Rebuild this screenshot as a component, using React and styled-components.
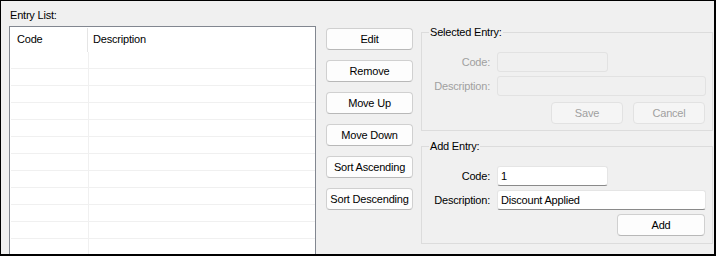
import React from 'react'
import styled, { createGlobalStyle } from 'styled-components'

const GlobalStyle = createGlobalStyle`
  html, body {
    margin: 0;
    padding: 0;
    background: #000;
  }
  body {
    font-family: "Liberation Sans", Arial, sans-serif;
    font-size: 11px;
    letter-spacing: -0.2px;
    color: #000;
  }
  #root {
    padding: 1px 2px 2px 1px;
  }
`

const Window = styled('div')`
  display: flex;
  align-items: flex-start;
  width: 713px;
  height: 253px;
  box-sizing: border-box;
  padding: 8px 1px 0 8px;
  background: #f0f0f0;
  overflow: hidden;
`

const ListColumn = styled('div')`
  display: flex;
  flex-direction: column;
  width: 307px;
  flex-shrink: 0;
`

const Caption = styled('div')`
  line-height: 13px;
  margin-bottom: 4px;
  padding-left: 1px;
`

const ListBox = styled('div')`
  border: 1px solid #828790;
  background: #fff;
  height: 300px;
`

const HeaderRow = styled('div')`
  display: flex;
  height: 25px;
  padding-top: 1px;
  box-sizing: border-box;
`

const HeaderCell = styled('div')`
  display: flex;
  align-items: center;
  box-sizing: border-box;
  width: ${(props) => props.width ? props.width + 'px' : 'auto'};
  flex: ${(props) => props.width ? 'none' : '1'};
  padding-left: ${(props) => props.indent}px;
  border-right: ${(props) => props.divider ? '1px solid #e5e5e5' : 'none'};
  padding-bottom: 2px;
`

const Rows = styled('div')`
  padding-left: 1px;
`

const Row = styled('div')`
  display: flex;
  height: 17px;
  box-sizing: border-box;
  border-bottom: 1px solid #f0f0f0;
`

const Cell = styled('div')`
  box-sizing: border-box;
  width: ${(props) => props.width ? props.width + 'px' : 'auto'};
  flex: ${(props) => props.width ? 'none' : '1'};
  border-right: ${(props) => props.divider ? '1px solid #f0f0f0' : 'none'};
`

const ButtonColumn = styled('div')`
  display: flex;
  flex-direction: column;
  gap: 10px;
  margin: 19px 0 0 10px;
  flex-shrink: 0;
`

const Button = styled('button')`
  font-family: inherit;
  font-size: 11px;
  letter-spacing: inherit;
  width: ${(props) => props.width || 87}px;
  height: 22px;
  padding: 0;
  box-sizing: border-box;
  border: 1px solid ${(props) => props.disabled ? '#e2e2e2' : '#d0d0d0'};
  border-bottom-color: ${(props) => props.disabled ? '#e2e2e2' : '#b8b8b8'};
  border-radius: 4px;
  background: ${(props) => props.disabled ? '#f5f5f5' : '#fdfdfd'};
  color: ${(props) => props.disabled ? '#a0a0a0' : '#000'};
`

const GroupColumn = styled('div')`
  flex: 1;
  display: flex;
  flex-direction: column;
  gap: 9px;
  margin: 17px 0 0 8px;
`

const Group = styled('fieldset')`
  margin: 0;
  border: 1px solid #dcdcdc;
  padding: 13px 6px ${(props) => props.bottom}px 7px;
  min-width: 0;
`

const Legend = styled('legend')`
  padding: 0 1px;
  line-height: 13px;
`

const Form = styled('div')`
  display: grid;
  grid-template-columns: 61px 1fr;
  column-gap: 7px;
  row-gap: 4px;
  align-items: center;
`

const Label = styled('label')`
  text-align: right;
  color: ${(props) => props.disabled ? '#a0a0a0' : '#000'};
`

const Field = styled('div')`
  width: ${(props) => props.width}px;
  height: 20px;
  box-sizing: border-box;
  padding-left: 3px;
  display: flex;
  align-items: center;
  border: 1px solid ${(props) => props.disabled ? '#e2e2e2' : '#e5e5e5'};
  border-bottom-color: ${(props) => props.disabled ? '#e2e2e2' : '#8a8a8a'};
  border-radius: 3px;
  background: ${(props) => props.disabled ? '#f0f0f0' : '#fff'};
`

const Actions = styled('div')`
  display: flex;
  justify-content: flex-end;
  gap: 10px;
  margin-top: ${(props) => props.top}px;
  padding-right: 1px;
`

const rows = Array.from({ length: 12 })

export default function App() {
  return (
    <>
      <GlobalStyle />
      <Window>
        <ListColumn>
          <Caption>Entry List:</Caption>
          <ListBox>
            <HeaderRow>
              <HeaderCell width={78} indent={7} divider>Code</HeaderCell>
              <HeaderCell indent={5}>Description</HeaderCell>
            </HeaderRow>
            <Rows>
              {rows.map((_, i) => (
                <Row key={i}>
                  <Cell width={78} divider />
                  <Cell />
                </Row>
              ))}
            </Rows>
          </ListBox>
        </ListColumn>

        <ButtonColumn>
          <Button>Edit</Button>
          <Button>Remove</Button>
          <Button>Move Up</Button>
          <Button>Move Down</Button>
          <Button>Sort Ascending</Button>
          <Button>Sort Descending</Button>
        </ButtonColumn>

        <GroupColumn>
          <Group bottom={6}>
            <Legend>Selected Entry:</Legend>
            <Form>
              <Label disabled>Code:</Label>
              <Field width={111} disabled />
              <Label disabled>Description:</Label>
              <Field width={209} disabled />
            </Form>
            <Actions top={6}>
              <Button width={72} disabled>Save</Button>
              <Button width={72} disabled>Cancel</Button>
            </Actions>
          </Group>
          <Group bottom={7}>
            <Legend>Add Entry:</Legend>
            <Form>
              <Label>Code:</Label>
              <Field width={111}>1</Field>
              <Label>Description:</Label>
              <Field width={209}>Discount Applied</Field>
            </Form>
            <Actions top={4}>
              <Button width={88}>Add</Button>
            </Actions>
          </Group>
        </GroupColumn>
      </Window>
    </>
  )
}
